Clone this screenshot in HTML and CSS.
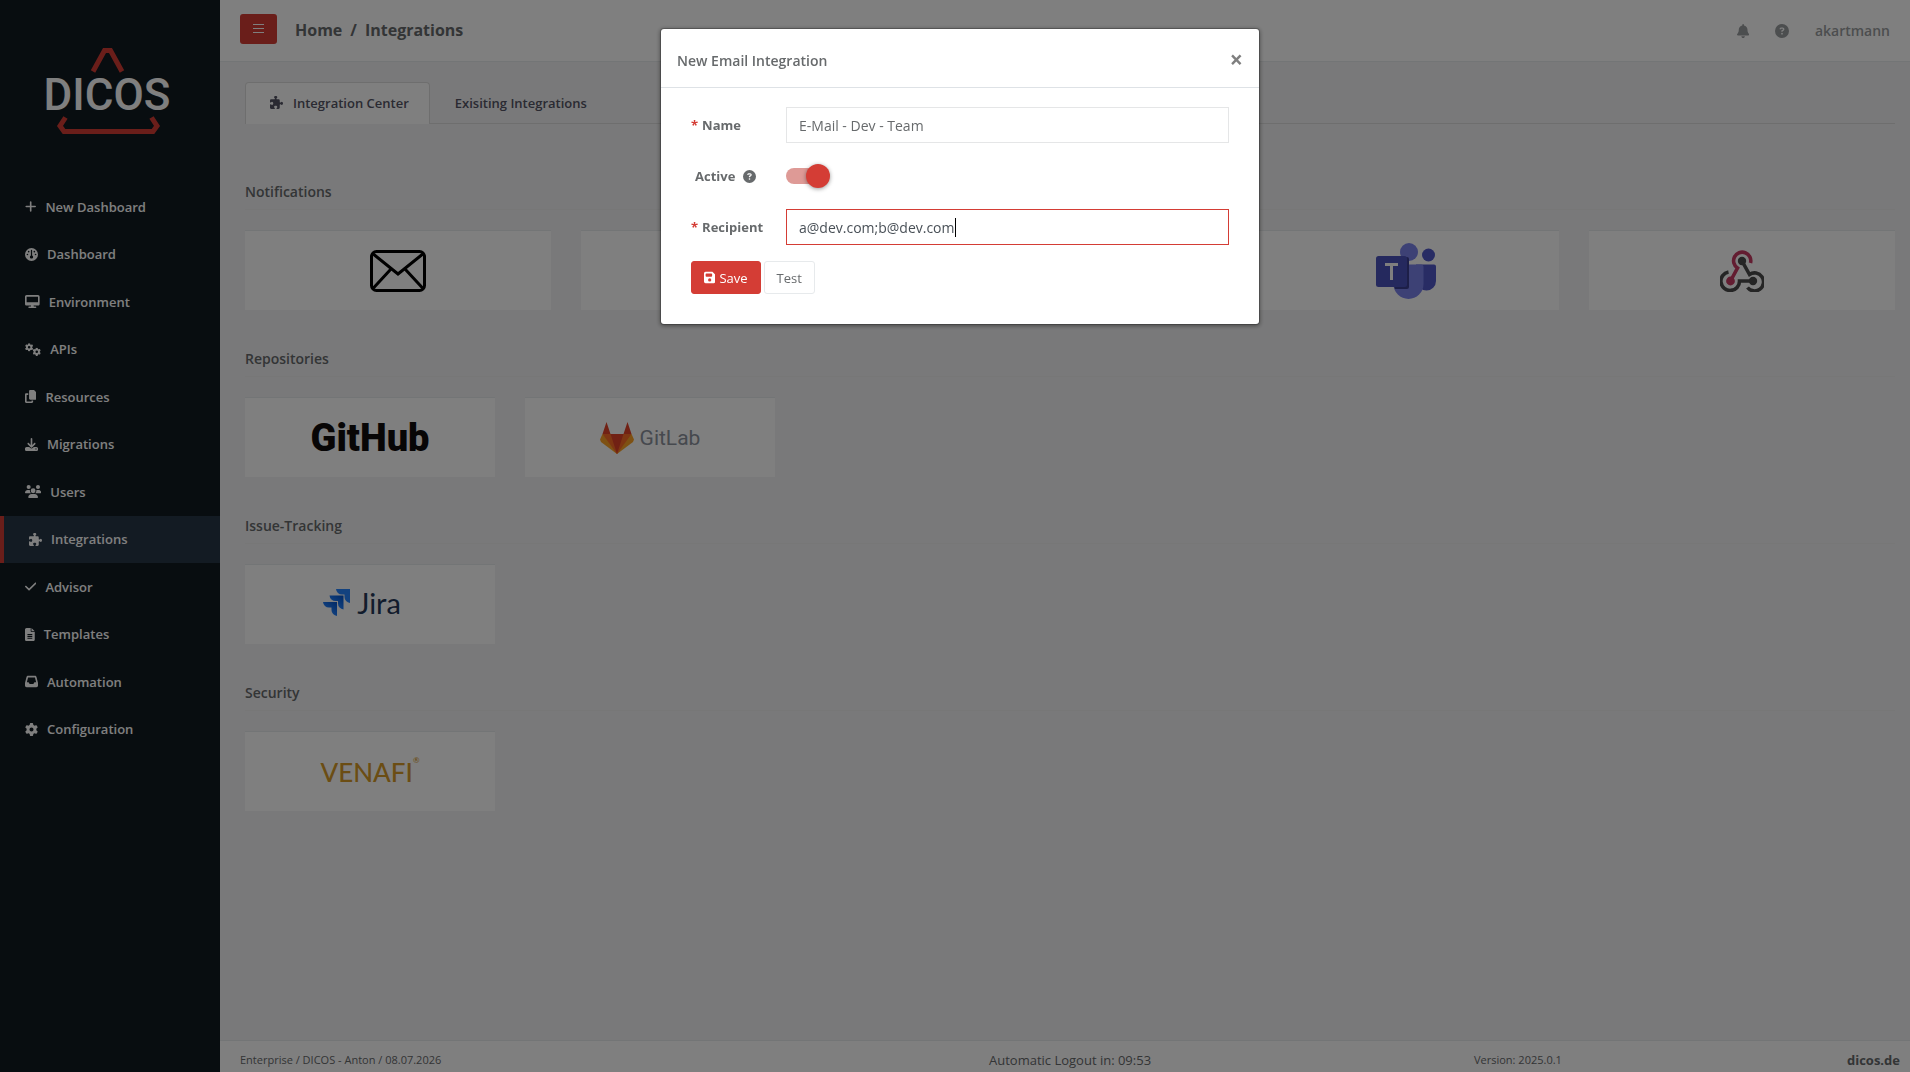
FILE: index.html
```html
<!DOCTYPE html>
<html lang="en">
<head>
<meta charset="utf-8">
<title>DICOS - Integrations</title>
<link rel="stylesheet" href="styles.css">
</head>
<body>
<svg class="sprite" aria-hidden="true">
  <symbol id="gear" viewBox="0 0 512 512"><path d="M495.9 166.6c3.2 8.7 .5 18.4-6.4 24.6l-43.3 39.4c1.1 8.3 1.7 16.8 1.7 25.4s-.6 17.1-1.7 25.4l43.3 39.4c6.9 6.2 9.6 15.9 6.4 24.6c-4.4 11.9-9.7 23.3-15.8 34.3l-4.7 8.1c-6.6 11-14 21.4-22.1 31.2c-5.9 7.2-15.7 9.6-24.5 6.8l-55.7-17.7c-13.4 10.3-28.2 18.9-44 25.4l-12.5 57.1c-2 9.1-9 16.3-18.2 17.8c-13.8 2.3-28 3.5-42.5 3.5s-28.7-1.2-42.5-3.5c-9.2-1.5-16.2-8.7-18.2-17.8l-12.5-57.1c-15.8-6.5-30.6-15.1-44-25.4L83.1 425.9c-8.8 2.8-18.6 .3-24.5-6.8c-8.1-9.8-15.5-20.2-22.1-31.2l-4.7-8.1c-6.1-11-11.4-22.4-15.8-34.3c-3.2-8.7-.5-18.4 6.4-24.6l43.3-39.4C64.6 273.1 64 264.6 64 256s.6-17.1 1.7-25.4L22.4 191.2c-6.9-6.2-9.6-15.9-6.4-24.6c4.4-11.9 9.7-23.3 15.8-34.3l4.7-8.1c6.6-11 14-21.4 22.1-31.2c5.9-7.2 15.7-9.6 24.5-6.8l55.7 17.7c13.4-10.3 28.2-18.9 44-25.4l12.5-57.1c2-9.1 9-16.3 18.2-17.8C227.3 1.2 241.5 0 256 0s28.7 1.2 42.5 3.5c9.2 1.5 16.2 8.7 18.2 17.8l12.5 57.1c15.8 6.5 30.6 15.1 44 25.4l55.7-17.7c8.8-2.8 18.6-.3 24.5 6.8c8.1 9.8 15.5 20.2 22.1 31.2l4.7 8.1c6.1 11 11.4 22.4 15.8 34.3zM256 336a80 80 0 1 0 0-160 80 80 0 1 0 0 160z"/></symbol>
  <symbol id="puzzle" viewBox="0 0 512 512"><path d="M192 104.8c0-9.2-5.8-17.3-13.2-22.8C167.2 73.3 160 61.3 160 48c0-26.5 28.7-48 64-48s64 21.5 64 48c0 13.3-7.2 25.3-18.8 34c-7.4 5.5-13.2 13.6-13.2 22.8v0c0 12.8 10.4 23.2 23.2 23.2H336c26.5 0 48 21.5 48 48v56.8c0 12.8 10.4 23.2 23.2 23.2v0c9.2 0 17.3-5.8 22.8-13.2c8.7-11.6 20.7-18.8 34-18.8c26.5 0 48 28.7 48 64s-21.5 64-48 64c-13.3 0-25.3-7.2-34-18.8c-5.5-7.4-13.6-13.2-22.8-13.2v0c-12.8 0-23.2 10.4-23.2 23.2V464c0 26.5-21.5 48-48 48H279.2c-12.8 0-23.2-10.4-23.2-23.2v0c0-9.2 5.8-17.3 13.2-22.8c11.6-8.7 18.8-20.7 18.8-34c0-26.5-28.7-48-64-48s-64 21.5-64 48c0 13.3 7.2 25.3 18.8 34c7.4 5.5 13.2 13.6 13.2 22.8v0c0 12.8-10.4 23.2-23.2 23.2H48c-26.5 0-48-21.5-48-48V343.2C0 330.4 10.4 320 23.2 320v0c9.2 0 17.3 5.8 22.8 13.2C54.7 344.8 66.7 352 80 352c26.5 0 48-28.7 48-64s-21.5-64-48-64c-13.3 0-25.3 7.2-34 18.8C40.5 250.2 32.4 256 23.2 256v0C10.4 256 0 245.6 0 232.8V176c0-26.5 21.5-48 48-48H168.8c12.8 0 23.2-10.4 23.2-23.2v0z"/></symbol>
  <symbol id="question" viewBox="0 0 512 512"><path d="M256 512A256 256 0 1 0 256 0a256 256 0 1 0 0 512zM169.8 165.3c7.9-22.3 29.1-37.3 52.8-37.3h58.3c34.9 0 63.1 28.3 63.1 63.1c0 22.6-12.1 43.5-31.7 54.8L280 264.4c-.2 13-10.9 23.6-24 23.6c-13.3 0-24-10.7-24-24V250.5c0-8.6 4.6-16.5 12.1-20.8l44.3-25.4c4.7-2.7 7.6-7.7 7.6-13.1c0-8.4-6.8-15.1-15.1-15.1H222.6c-3.4 0-6.4 2.1-7.5 5.3l-.4 1.2c-4.4 12.5-18.2 19-30.6 14.6s-19-18.2-14.6-30.6l.4-1.2zM224 352a32 32 0 1 1 64 0 32 32 0 1 1 -64 0z"/></symbol>
</svg>

<div class="app">
  <aside class="sidebar">
    <a class="brand" href="#" aria-label="DICOS">
      <svg width="146" height="96" viewBox="-10 0 146 96">
        <path class="brand-mark" d="M49 23.500L60.500 2.500H66.500L78 23.500M21.500 69.500L16 78L20 83.500H109L113 78L107.500 69.500"/>
        <text class="brand-name" x="63" y="62" text-anchor="middle">DICOS</text>
      </svg>
    </a>
    <nav class="menu">
      <a href="#"><svg class="icon" viewBox="0 0 448 512"><path d="M256 80c0-17.700-14.300-32-32-32s-32 14.300-32 32V224H48c-17.700 0-32 14.300-32 32s14.300 32 32 32H192V432c0 17.700 14.300 32 32 32s32-14.300 32-32V288H400c17.700 0 32-14.300 32-32s-14.300-32-32-32H256V80z"/></svg>New Dashboard</a>
      <a href="#"><svg class="icon" viewBox="0 0 512 512"><path d="M0 256a256 256 0 1 1 512 0A256 256 0 1 1 0 256zm320 96c0-26.900-16.500-49.900-40-59.300V88c0-13.300-10.700-24-24-24s-24 10.700-24 24V292.700c-23.500 9.500-40 32.500-40 59.300c0 35.300 28.700 64 64 64s64-28.700 64-64zM144 176a32 32 0 1 0 0-64 32 32 0 1 0 0 64zm-16 80a32 32 0 1 0 -64 0 32 32 0 1 0 64 0zm288 32a32 32 0 1 0 0-64 32 32 0 1 0 0 64zM400 144a32 32 0 1 0 -64 0 32 32 0 1 0 64 0z"/></svg>Dashboard</a>
      <a href="#"><svg class="icon" viewBox="0 0 576 512"><path d="M64 0C28.700 0 0 28.700 0 64V352c0 35.300 28.700 64 64 64H240l-10.700 32H160c-17.700 0-32 14.300-32 32s14.300 32 32 32H416c17.700 0 32-14.300 32-32s-14.300-32-32-32H346.700L336 416H512c35.300 0 64-28.700 64-64V64c0-35.300-28.700-64-64-64H64zM512 64V288H64V64H512z"/></svg>Environment</a>
      <a href="#"><svg class="icon" viewBox="0 0 640 512"><use href="#gear" x="0" y="5" width="325" height="325"/><use href="#gear" x="300" y="185" width="325" height="325"/></svg>APIs</a>
      <a href="#"><svg class="icon" viewBox="0 0 448 512"><path d="M208 0H332.100c12.700 0 24.900 5.100 33.900 14.100l67.900 67.900c9 9 14.100 21.200 14.100 33.900V336c0 26.500-21.500 48-48 48H208c-26.500 0-48-21.500-48-48V48c0-26.500 21.500-48 48-48zM48 128h80v64H64V448H256V416h64v48c0 26.500-21.500 48-48 48H48c-26.500 0-48-21.500-48-48V176c0-26.500 21.500-48 48-48z"/></svg>Resources</a>
      <a href="#"><svg class="icon" viewBox="0 0 512 512"><path d="M288 32c0-17.700-14.300-32-32-32s-32 14.300-32 32V274.700l-73.400-73.400c-12.500-12.500-32.800-12.500-45.300 0s-12.500 32.800 0 45.300l128 128c12.500 12.500 32.800 12.500 45.300 0l128-128c12.500-12.500 12.500-32.800 0-45.300s-32.800-12.500-45.300 0L288 274.700V32zM64 352c-35.300 0-64 28.700-64 64v32c0 35.300 28.700 64 64 64H448c35.300 0 64-28.700 64-64V416c0-35.300-28.700-64-64-64H346.500l-45.300 45.300c-25 25-65.500 25-90.500 0L165.500 352H64zm368 56a24 24 0 1 1 0 48 24 24 0 1 1 0-48z"/></svg>Migrations</a>
      <a href="#"><svg class="icon" viewBox="0 0 640 512"><path d="M144 0a80 80 0 1 1 0 160A80 80 0 1 1 144 0zM512 0a80 80 0 1 1 0 160A80 80 0 1 1 512 0zM0 298.700C0 239.800 47.800 192 106.700 192h42.700c15.900 0 31 3.500 44.600 9.700c-1.300 7.200-1.900 14.700-1.900 22.300c0 38.200 16.800 72.500 43.300 96H21.300C9.600 320 0 310.400 0 298.700zM405.300 320c26.600-23.500 43.300-57.800 43.300-96c0-7.600-.7-15-1.900-22.300c13.600-6.300 28.700-9.700 44.600-9.700h42.700C592.200 192 640 239.800 640 298.700c0 11.800-9.600 21.300-21.300 21.300H405.300zM224 224a96 96 0 1 1 192 0 96 96 0 1 1 -192 0zM128 485.300C128 411.700 187.700 352 261.300 352H378.700C452.300 352 512 411.700 512 485.300c0 14.700-11.900 26.700-26.700 26.700H154.700c-14.700 0-26.700-11.900-26.700-26.700z"/></svg>Users</a>
      <a class="active" href="#" aria-current="page"><svg class="icon" viewBox="0 0 512 512"><use href="#puzzle"/></svg>Integrations</a>
      <a href="#"><svg class="icon" viewBox="0 0 448 512"><path d="M438.600 105.400c12.500 12.500 12.500 32.800 0 45.300l-256 256c-12.500 12.500-32.800 12.500-45.300 0l-128-128c-12.500-12.500-12.500-32.800 0-45.300s32.800-12.500 45.300 0L160 338.700 393.400 105.400c12.500-12.500 32.800-12.500 45.300 0z"/></svg>Advisor</a>
      <a href="#"><svg class="icon" viewBox="0 0 384 512"><path fill-rule="evenodd" d="M64 0C28.700 0 0 28.700 0 64V448c0 35.300 28.700 64 64 64H320c35.300 0 64-28.700 64-64V160H256c-17.700 0-32-14.300-32-32V0H64zM256 0V128H384zM96 240H288V280H96zM96 310H288V350H96zM96 380H288V420H96z"/></svg>Templates</a>
      <a href="#"><svg class="icon" viewBox="0 0 512 512"><path d="M121 32C91.600 32 66 52 58.900 80.500L1.900 308.400C.6 313.500 0 318.700 0 323.900V416c0 35.300 28.700 64 64 64H448c35.300 0 64-28.700 64-64V323.900c0-5.200-.6-10.400-1.900-15.500l-57-227.900C446 52 420.400 32 391 32H121zm0 64H391l48 192H387.800c-12.100 0-23.200 6.800-28.600 17.700l-14.300 28.600c-5.400 10.800-16.500 17.700-28.600 17.700H195.800c-12.100 0-23.200-6.800-28.600-17.700l-14.300-28.600c-5.400-10.800-16.500-17.700-28.600-17.700H73L121 96z"/></svg>Automation</a>
      <a href="#"><svg class="icon" viewBox="0 0 512 512"><use href="#gear"/></svg>Configuration</a>
    </nav>
  </aside>

  <div class="page">
    <header class="topbar">
      <button class="toggle-menu" type="button" aria-label="Toggle menu"><svg width="11" height="12" viewBox="0 0 11 12"><path d="M0 1h11v1H0zM0 5h11v1H0zM0 9h11v1H0z"/></svg></button>
      <nav class="crumbs"><a href="#">Home</a><span>/</span><span>Integrations</span></nav>
      <div class="tools">
        <a href="#" aria-label="Alerts"><svg class="icon" viewBox="0 0 448 512"><path d="M224 0c-17.700 0-32 14.300-32 32V51.200C119 66 64 130.600 64 208v18.800c0 47-17.300 92.400-48.500 127.600l-7.400 8.300c-8.400 9.400-10.400 22.900-5.300 34.400S19.400 416 32 416H416c12.600 0 24-7.400 29.200-18.900s3.100-25-5.300-34.400l-7.400-8.300C401.300 319.200 384 273.900 384 226.800V208c0-77.400-55-142-128-156.800V32c0-17.700-14.300-32-32-32zm45.300 493.300c12-12 18.700-28.300 18.700-45.300H160c0 17 6.700 33.300 18.700 45.300s28.300 18.700 45.300 18.700s33.300-6.700 45.300-18.700z"/></svg></a>
        <a href="#" aria-label="Help"><svg class="icon" viewBox="0 0 512 512"><use href="#question"/></svg></a>
        <a href="#">akartmann</a>
      </div>
    </header>

    <main class="content">
      <nav class="tabs">
        <a class="tab current" href="#"><svg class="icon" viewBox="0 0 512 512"><use href="#puzzle"/></svg>Integration Center</a>
        <a class="tab" href="#">Exisiting Integrations</a>
      </nav>

      <div class="groups">
        <section>
          <h2>Notifications</h2>
          <div class="cards five">
            <a class="card" href="#" aria-label="Email"><svg width="56" height="42" viewBox="0 0 56 42" fill="none" stroke="#000" stroke-width="3"><rect x="1.500" y="1.500" width="53" height="39" rx="5"/><path d="M2 3L28 24L54 3M2.500 39L21 19M53.500 39L35 19"/></svg></a>
            <a class="card" href="#"></a>
            <a class="card" href="#"></a>
            <a class="card" href="#" aria-label="Teams">
              <svg width="60" height="56" viewBox="0 0 60 56">
                <circle cx="52.500" cy="12" r="6.500" fill="#5059c9"/><path d="M40 21.500H58Q60 21.500 60 23.500V38a9.500 9.500 0 0 1-19 0z" fill="#5059c9"/>
                <circle cx="33" cy="9" r="9" fill="#7b83eb"/><path d="M18 21.500H45Q47.500 21.500 47.500 24V41a15 15 0 0 1-30 0z" fill="#7b83eb"/>
                <path d="M18 14H31Q33 14 33 16V44Q33 46 31 46H19Q17.500 42 17.500 40z" fill="#3a3f90"/>
                <rect y="13" width="31" height="31" rx="2.500" fill="#4b53bc"/>
                <path d="M9 20H22V23H17V37H14V23H9z" fill="#fff"/>
              </svg>
            </a>
            <a class="card" href="#" aria-label="Webhook">
              <svg width="44" height="42" viewBox="0 0 44 42" fill="none" stroke-width="3.600">
                <path d="M10.500 31L17.500 18A8.600 8.600 0 1 1 30.500 13" stroke="#c73a63"/><circle cx="10.500" cy="31" r="2.600" fill="#c73a63" stroke="#c73a63"/>
                <path d="M22 11L29.500 24.500A9 9 0 1 1 27.500 37.500M33 31H19.500A9.300 9.300 0 1 1 8.500 22" stroke="#4b4b4b"/><circle cx="22" cy="11" r="4.200" fill="#4b4b4b"/><circle cx="33" cy="31" r="4.200" fill="#4b4b4b"/>
              </svg>
            </a>
          </div>
        </section>
        <section>
          <h2>Repositories</h2>
          <div class="cards six">
            <a class="card github" href="#">GitHub</a>
            <a class="card gitlab" href="#"><svg width="34" height="32" viewBox="0 0 34 32"><path d="M17 32L1 20L0 17.500L2.500 12H31.500L34 17.500L33 20z" fill="#fca326"/><path d="M17 32L2.500 12H31.500z" fill="#fc6d26"/><path d="M17 32L10.500 12H23.500zM2.500 12L6.500 0L10.500 12zM31.500 12L27.500 0L23.500 12z" fill="#e24329"/></svg>GitLab</a>
          </div>
        </section>
        <section>
          <h2>Issue-Tracking</h2>
          <div class="cards six">
            <a class="card jira" href="#"><svg width="28" height="28" viewBox="0 0 28 28"><defs><linearGradient id="fold" x1="1" y1="0" x2=".4" y2=".7"><stop offset="0" stop-color="#0052cc"/><stop offset="1" stop-color="#2684ff"/></linearGradient></defs><path d="M13 0H27V14A6 6 0 0 1 21.500 8V5.500H19A6 6 0 0 1 13 0z" fill="#2684ff"/><path d="M6.500 6.500H20.500V20.500A6 6 0 0 1 15 14.500V12H12.500A6 6 0 0 1 6.500 6.500z" fill="url(#fold)"/><path d="M0 13H14V27A6 6 0 0 1 8.500 21V18.500H6A6 6 0 0 1 0 13z" fill="url(#fold)"/></svg>Jira</a>
          </div>
        </section>
        <section>
          <h2>Security</h2>
          <div class="cards six">
            <a class="card venafi" href="#">VENAFI<sup>®</sup></a>
          </div>
        </section>
      </div>
    </main>

    <footer class="footer">
      <span>Enterprise / DICOS - Anton / 08.07.2026</span>
      <span class="logout">Automatic Logout in: 09:53</span>
      <span>Version: 2025.0.1</span>
      <a href="#">dicos.de</a>
    </footer>
  </div>
</div>

<div class="backdrop">
  <div class="modal" role="dialog" aria-modal="true" aria-labelledby="dialog-title">
    <div class="modal-head">
      <h1 id="dialog-title">New Email Integration</h1>
      <button class="close" type="button" aria-label="Close">×</button>
    </div>
    <form class="modal-body">
      <div class="field">
        <label for="name"><i>*</i> Name</label>
        <input class="text" id="name" type="text" value="E-Mail - Dev - Team">
      </div>
      <div class="field">
        <label class="optional" for="active">Active <svg class="icon" viewBox="0 0 512 512"><use href="#question"/></svg></label>
        <input class="switch" id="active" type="checkbox" checked>
      </div>
      <div class="field">
        <label for="recipient"><i>*</i> Recipient</label>
        <div class="text focused"><input id="recipient" type="text" value="a@dev.com;b@dev.com" size="1"><span class="caret"></span></div>
      </div>
      <div class="actions">
        <button class="save" type="submit"><svg class="icon" viewBox="0 0 448 512"><path d="M64 32C28.700 32 0 60.700 0 96V416c0 35.300 28.700 64 64 64H384c35.300 0 64-28.700 64-64V173.300c0-17-6.700-33.300-18.700-45.300L352 50.700C340 38.700 323.700 32 306.700 32H64zm0 96c0-17.700 14.300-32 32-32H288c17.700 0 32 14.300 32 32v64c0 17.700-14.300 32-32 32H96c-17.700 0-32-14.300-32-32V128zM224 288a64 64 0 1 1 0 128 64 64 0 1 1 0-128z"/></svg>Save</button>
        <button class="test" type="button">Test</button>
      </div>
    </form>
  </div>
</div>
</body>
</html>
```
FILE: styles.css
```css
* { box-sizing: border-box; }

body {
  margin: 0;
  font: 13px/20px "Open Sans", "Noto Sans", sans-serif;
  color: #676a6c;
  background: #f3f3f4;
}

a { color: inherit; text-decoration: none; }
h1, h2 { margin: 0; font-size: 14px; font-weight: 600; }
.sprite { position: absolute; width: 0; height: 0; }
.icon { height: 13px; fill: currentColor; flex: none; }

.app { display: flex; min-height: 100vh; }

/* Sidebar */
.sidebar { width: 220px; flex: none; background: #101a20; color: #fff; }
.brand { display: flex; justify-content: center; height: 183px; padding: 48px 6px 0 0; }
.brand-mark { fill: none; stroke: #d43d35; stroke-width: 5px; }
.brand-name { font: 500 44px Roboto, sans-serif; fill: #fff; }
.menu { display: grid; grid-template-rows: repeat(12, 1fr); height: 570px; font-weight: 600; }
.menu a { display: flex; align-items: center; gap: 9px; padding-left: 25px; }
.menu .active { background: #263646; border-left: 4px solid #d43d35; }

/* Page */
.page { display: flex; flex-direction: column; flex: 1; min-width: 0; }
.topbar { display: flex; align-items: center; height: 62px; padding: 0 20px 4px; background: #fff; border-bottom: 1px solid #e7eaec; }
.toggle-menu { width: 37px; height: 30px; padding: 0; border: 0; border-radius: 3px; background: #d43d35; fill: #fff; }
.toggle-menu svg { display: block; margin: auto; }
.crumbs { display: flex; gap: 8px; margin-left: 18px; padding-top: 2px; font-size: 16px; font-weight: 700; }
.tools { display: flex; align-items: center; gap: 26px; margin-left: auto; padding-top: 4px; font-size: 14px; font-weight: 600; color: #999c9e; }
.tools a { display: flex; }
.tools .icon { height: 14px; }

.content { flex: 1; padding: 20px 15px 0 25px; }
.tabs { display: flex; height: 42px; border-bottom: 1px solid #dddddd; font-weight: 600; color: #555565; }
.tab { display: flex; align-items: center; gap: 10px; height: 42px; padding: 0 20px 2px 24px; border: 1px solid transparent; border-bottom: 0; border-radius: 4px 4px 0 0; }
.tab.current { background: #fff; border-color: #dddddd; }

.groups { display: flex; flex-direction: column; gap: 37px; padding: 56px 0 37px; }
.groups h2 { padding-bottom: 5px; border-bottom: 1px solid #eeeeee; margin-bottom: 20px; line-height: 24px; }
.cards { display: grid; gap: 30px; }
.five { grid-template-columns: repeat(5, 1fr); }
.six { grid-template-columns: repeat(6, 1fr); }
.card { display: flex; align-items: center; justify-content: center; height: 80px; background: #fff; border-top: 1px solid #e7eaec; }
.github { font: 900 38px Roboto, sans-serif; color: #100c0d; }
.gitlab { gap: 6px; font: 400 21px Roboto, sans-serif; color: #8c929d; }
.jira { gap: 6px; padding: 0 16px 4px 0; font: 400 29px Lato, sans-serif; color: #253858; }
.venafi { font: 500 26px Lato, sans-serif; color: #d69a28; }
.venafi sup { align-self: flex-start; padding-top: 24px; font-size: 8px; line-height: 8px; }

.footer { display: grid; grid-template-columns: 749fr 485fr 426fr; grid-template-columns: 749fr 485fr 326fr 100fr; align-items: center; height: 32px; padding: 7px 10px 0 20px; background: #fff; border-top: 1px solid #e7eaec; font-size: 11px; }
.footer .logout { font-size: 13px; }
.footer a { justify-self: end; font-size: 13px; font-weight: 700; }

/* Dialog */
.backdrop { position: fixed; inset: 0; padding: 28px 0 0 10px; background: rgba(0, 0, 0, .5); }
.modal { width: 600px; margin: 0 auto; background: #fff; border: 1px solid rgba(0, 0, 0, .2); border-radius: 4px; background-clip: padding-box; box-shadow: 0 1px 4px rgba(0, 0, 0, .4); }
.modal-head { display: flex; justify-content: space-between; align-items: center; height: 59px; padding: 6px 16px 0; border-bottom: 1px solid #dee2e6; }
.close { padding: 0 0 4px; border: 0; background: none; font: 700 23px/20px "Open Sans", sans-serif; color: #7f7f7f; }
.modal-body { padding: 19px 30px 30px; }
.field { display: grid; grid-template-columns: 95px 1fr; align-items: center; height: 36px; margin-bottom: 15px; }
.field label { display: flex; align-items: center; gap: 4px; font-weight: 700; }
.field label i { font-style: normal; color: #d43d35; }
.field .optional { padding-left: 4px; gap: 8px; }
.text { width: 100%; height: 36px; padding: 6px 12px; border: 1px solid #e5e6e7; background: #fff; font: 14px "Open Sans", sans-serif; color: #676a6c; }
.focused { display: flex; align-items: center; border-color: #d43d35; color: #495057; }
.focused input { field-sizing: content; padding: 0; border: 0; outline: 0; font: inherit; color: inherit; }
.caret { width: 1px; height: 19px; background: #000; }

.switch { appearance: none; display: flex; align-items: center; width: 38px; height: 16px; margin: 0; border-radius: 8px; background: #de9a96; }
.switch::before { content: ""; flex: none; width: 24px; height: 24px; margin-left: 20px; border-radius: 50%; background: #d43d35; box-shadow: 0 1px 4px rgba(0, 0, 0, .4); }

.actions { display: flex; gap: 3px; padding-top: 1px; }
.actions button { display: flex; align-items: center; gap: 4px; height: 33px; padding: 0 12px; border: 1px solid #e7eaec; border-radius: 3px; background: #fff; font: 13px "Open Sans", sans-serif; color: #676a6c; }
.actions .save { background: #d43d35; border-color: #d43d35; color: #fff; }
```
